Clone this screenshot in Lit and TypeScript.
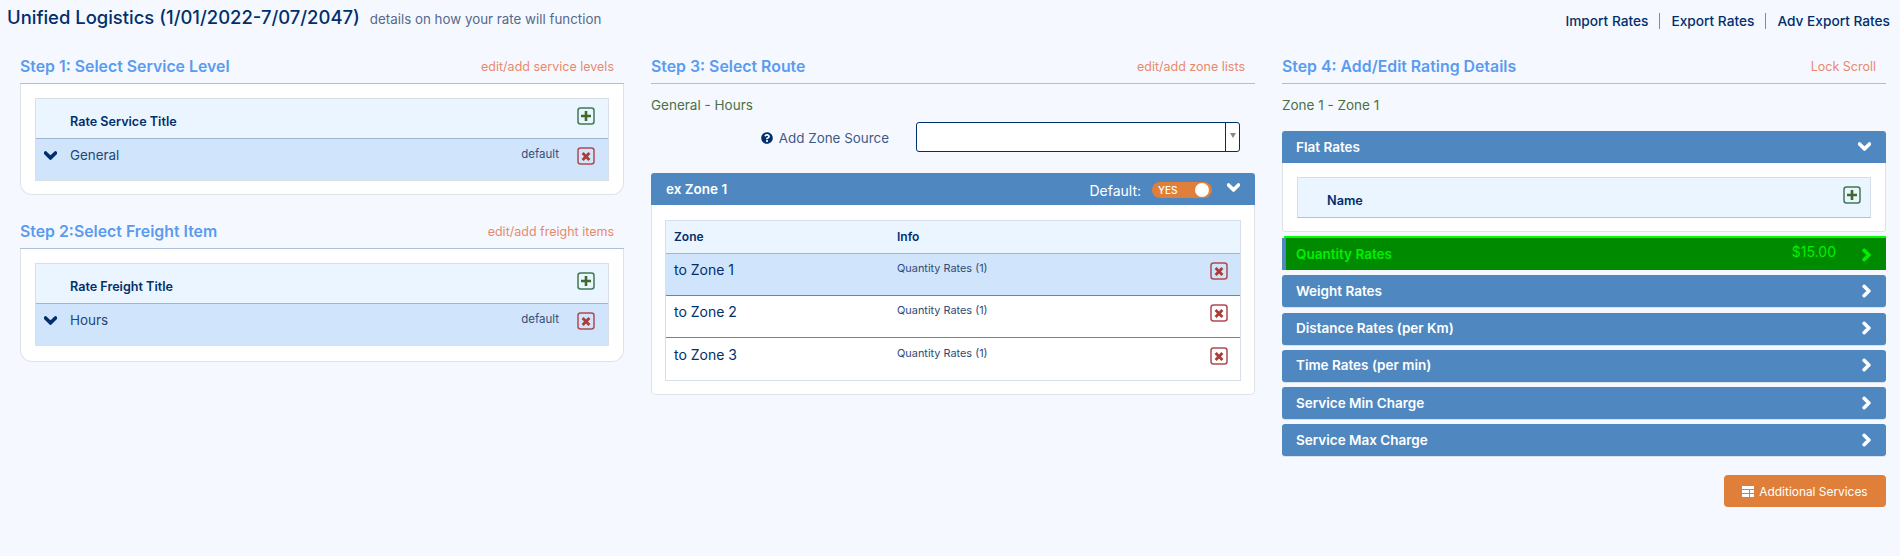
import { LitElement, html, css } from "lit";
import { customElement } from "lit/decorators.js";

const chevDown = () => html`<svg class="chev-d" viewBox="0 0 448 512"><path fill="currentColor" stroke="currentColor" stroke-width="45" d="M207.029 381.476L12.686 187.132c-9.373-9.373-9.373-24.569 0-33.941l22.667-22.667c9.357-9.357 24.522-9.375 33.901-.04L224 284.505l154.745-154.021c9.379-9.335 24.544-9.317 33.901.04l22.667 22.667c9.373 9.373 9.373 24.569 0 33.941L240.971 381.476c-9.373 9.372-24.569 9.372-33.942 0z"/></svg>`;
const chevRight = () => html`<svg class="chev-r" viewBox="0 0 320 512"><path fill="currentColor" stroke="currentColor" stroke-width="45" d="M285.476 272.971L91.132 467.314c-9.373 9.373-24.569 9.373-33.941 0l-22.667-22.667c-9.357-9.357-9.375-24.522-.04-33.901L188.505 256 34.484 101.255c-9.335-9.379-9.317-24.544.04-33.901l22.667-22.667c9.373-9.373 24.569-9.373 33.941 0L285.475 239.03c9.373 9.372 9.373 24.568.001 33.941z"/></svg>`;
const plus = () => html`<svg class="ico" viewBox="0 0 18 18"><rect x="1" y="1" width="16" height="16" rx="2.5" fill="none" stroke="#3f7a52" stroke-width="1.5"/><path d="M9 4v10M4 9h10" stroke="#3d6b2c" stroke-width="2.6" fill="none"/></svg>`;
const cross = () => html`<svg class="ico" viewBox="0 0 18 18"><rect x="1" y="1" width="16" height="16" rx="2.5" fill="none" stroke="#b04a52" stroke-width="1.5"/><path d="M5.6 6l6.8 7M12.4 6l-6.8 7" stroke="#ab3d38" stroke-width="2.8" fill="none"/></svg>`;

@customElement("app-root")
export class AppRoot extends LitElement {
  static styles = css`
    :host { display: block; width: 1900px; height: 556px; background: #f5f9ff; font-family: Inter, "Liberation Sans", sans-serif; color: #012f6c; overflow: hidden; }
    .top { height: 50px; display: flex; justify-content: space-between; box-sizing: border-box; padding: 0 10px 0 7px; }
    .title { display: flex; align-items: baseline; gap: 10px; padding-top: 6px; }
    .title h1 { margin: 0; font-size: 18.45px; line-height: 22px; font-weight: 500; color: #012f6c; }
    .title span { font-size: 13.35px; color: #56688c; }
    .links { display: flex; align-items: center; height: 16px; margin-top: 13px; font-size: 13.7px; font-weight: 500; }
    .links a { padding: 0 11px; border-right: 1px solid #7e8ba5; line-height: 16px; }
    .links a:last-child { border: 0; padding-right: 0; }
    .cols { display: grid; grid-template-columns: repeat(3, 604px); column-gap: 27px; padding-left: 20px; }
    .head { height: 34px; box-sizing: border-box; display: flex; align-items: center; justify-content: space-between; border-bottom: 1px solid #adc0da; padding-right: 10px; }
    .head h2 { margin: 0; font-size: 15.85px; font-weight: 600; color: #5a9bf0; }
    .head a { font-size: 12.5px; color: #e8896c; }
    .panel { background: #fff; border: 1px solid #dfe3e8; border-top: 0; border-radius: 0 0 12px 12px; padding: 14px 14px 13px; }
    .s2 { margin-top: 20px; }
    .s2 .panel { padding-top: 14px; padding-bottom: 15px; }
    .tbl { border: 1px solid #d8dfe6; }
    .thead { background: #eaf5ff; border-bottom: 1px solid #9db6d6; display: flex; justify-content: space-between; padding: 8px 13px 0 34px; box-sizing: border-box; height: 40px; }
    .thead b { font-size: 12.6px; line-height: 16px; font-weight: 600; margin-top: 7px; }
    .row { height: 41px; background: #d0e5fb; display: flex; align-items: flex-start; padding: 8px 13px 0 8px; box-sizing: border-box; }
    .chev-d { width: 13px; height: 15px; display: block; }
    .row .chev-d { margin-top: 1px; }
    .row .nm { margin-left: 13px; margin-top: -1px; font-size: 13.4px; line-height: 18px; flex: 1; color: #22467a; }
    .row .df { font-size: 11.5px; margin-right: 18px; margin-top: -1px; color: #33507c; line-height: 16px; }
    .ico { width: 18px; height: 18px; display: block; flex: none; }
    .sub { font-size: 13.5px; line-height: 18px; height: 18px; margin-top: 12px; color: #4c7046; }
    .src { display: flex; align-items: center; height: 30px; margin-top: 8px; }
    .lbl { width: 265px; display: flex; justify-content: flex-end; align-items: center; gap: 6px; font-size: 13.4px; color: #3f5a88; padding: 2px 27px 0 0; box-sizing: border-box; }
    .q { width: 12px; height: 12px; display: block; color: #012f6c; }
    .select { width: 324px; height: 30px; background: #fff; border: 1px solid #012f6c; border-radius: 3px; box-sizing: border-box; display: flex; justify-content: flex-end; }
    .arrowbox { width: 14px; border-left: 1px solid #012f6c; display: flex; justify-content: center; padding-top: 10px; box-sizing: border-box; }
    .arrowbox i { width: 0; height: 0; border: 3px solid transparent; border-top: 5px solid #888; }
    .bar { background: #4f88c0; color: #fff; height: 32px; border-radius: 3px 3px 0 0; display: flex; align-items: center; justify-content: space-between; padding: 0 15px 1px 14px; box-sizing: border-box; font-size: 13.5px; font-weight: 600; box-shadow: 0 1px 0 #d8e2ec; }
    .zone { margin-top: 21px; }
    .zone .bar { padding-left: 15px; padding-right: 15px; }
    .bar .r { display: flex; align-items: center; }
    .dlbl { font-size: 14px; font-weight: 400; margin: 4px 11px 0 0; }
    .tog { width: 60px; height: 16px; border-radius: 8px; background: #e07f3a; display: flex; align-items: center; justify-content: space-between; padding: 0 3px 0 6px; box-sizing: border-box; font-size: 10px; font-weight: 500; margin: 2px 15px 0 0; }
    .tog i { width: 14px; height: 14px; border-radius: 50%; background: #fff; }
    .zone .chev-d { margin-top: -2px; }
    .bar .chev-d { color: #fff; }
    .zpanel { background: #fff; border: 1px solid #dfe3e8; border-top: 0; border-radius: 0 0 5px 5px; padding: 15px 13px 13px; }
    .ztbl { border: 1px solid #d8dfe6; }
    .zh { height: 33px; background: #eaf5ff; border-bottom: 1px solid #9db6d6; box-sizing: border-box; display: grid; grid-template-columns: 223px 1fr; align-items: center; padding-left: 8px; font-size: 12px; font-weight: 600; padding-bottom: 1px; }
    .zr { height: 42px; display: grid; grid-template-columns: 223px 1fr 18px; padding: 0 12px 0 8px; box-sizing: border-box; border-bottom: 1px solid #6685ae; }
    .zr:last-child { border-bottom: 0; }
    .zr.sel { background: #d0e5fb; }
    .zr .z { font-size: 14px; line-height: 18px; margin-top: 7px; }
    .zr .i { font-size: 10.9px; color: #2f4a78; line-height: 14px; margin-top: 7px; }
    .zr .ico { margin-top: 8px; }
    .zr:last-child .ico { margin-top: 9px; }
    .zr:last-child .z, .zr:last-child .i { margin-top: 8px; }
    .bars { display: flex; flex-direction: column; }
    .flat { margin-top: 17px; }
    .fp { background: #fff; border: 1px solid #dfe3e8; border-top: 0; border-radius: 0 0 4px 4px; padding: 14px 14px 13px; }
    .ft { height: 41px; background: #eaf5ff; border: 1px solid #d5dfea; border-bottom: 1px solid #b1c2da; box-sizing: border-box; display: flex; justify-content: space-between; padding: 8px 9px 0 29px; }
    .ft b { font-size: 12.7px; line-height: 16px; font-weight: 600; margin-top: 7px; }
    .item { margin-top: 5.3px; border-radius: 3px; height: 32px; }
    .item .chev-r { width: 9px; height: 14px; display: block; color: #fff; }
    .q-rate { margin-top: 4px; height: 34px; background: linear-gradient(90deg, #4f88c0 4px, #008a00 4px); border-top: 2px solid #00ff00; border-radius: 0; color: #00f000; padding-top: 1px; box-shadow: none; border-image: linear-gradient(90deg, #f5f9ff 3px, #00ff00 3px) 1; }
    .item.q-rate .chev-r { color: #00f000; margin-top: 1px; }
    .price { font-size: 14px; font-weight: 400; margin: -5px 26px 0 0; }
    .btnrow { display: flex; justify-content: flex-end; margin-top: 19px; }
    .btn { width: 162px; height: 32px; background: #e07f3a; color: #fff; border-radius: 4px; display: flex; align-items: center; justify-content: center; gap: 5px; font-size: 11.9px; font-weight: 400; }
    .btn svg { width: 12px; height: 11px; display: block; }
  `;

  render() {
    const q = html`<svg class="q" viewBox="0 0 512 512"><path fill="currentColor" d="M504 256c0 136.997-111.043 248-248 248S8 392.997 8 256C8 119.083 119.043 8 256 8s248 111.083 248 248zM262.655 90c-54.497 0-89.255 22.957-116.549 63.758-3.536 5.286-2.353 12.415 2.715 16.258l34.699 26.31c5.205 3.947 12.621 3.008 16.665-2.122 17.864-22.658 30.113-35.797 57.303-35.797 20.429 0 45.698 13.148 45.698 32.958 0 14.976-12.363 22.667-32.534 33.976C247.128 238.528 216 254.941 216 296v4c0 6.627 5.373 12 12 12h56c6.627 0 12-5.373 12-12v-1.333c0-28.462 83.186-29.647 83.186-106.667 0-58.002-60.165-102-116.531-102zM256 338c-25.365 0-46 20.635-46 46 0 25.364 20.635 46 46 46s46-20.636 46-46c0-25.365-20.635-46-46-46z"/></svg>`;
    const listTable = (title: string, name: string) => html`<div class="tbl">
      <div class="thead"><b>${title}</b>${plus()}</div>
      <div class="row">${chevDown()}<span class="nm">${name}</span><span class="df">default</span>${cross()}</div>
    </div>`;
    return html`
      <div class="top">
        <div class="title"><h1>Unified Logistics (1/01/2022-7/07/2047)</h1><span>details on how your rate will function</span></div>
        <div class="links"><a>Import Rates</a><a>Export Rates</a><a>Adv Export Rates</a></div>
      </div>
      <div class="cols">
        <div>
          <div class="head"><h2>Step 1: Select Service Level</h2><a>edit/add service levels</a></div>
          <div class="panel">${listTable("Rate Service Title", "General")}</div>
          <div class="s2">
            <div class="head"><h2>Step 2:Select Freight Item</h2><a>edit/add freight items</a></div>
            <div class="panel">${listTable("Rate Freight Title", "Hours")}</div>
          </div>
        </div>
        <div>
          <div class="head"><h2>Step 3: Select Route</h2><a>edit/add zone lists</a></div>
          <div class="sub">General - Hours</div>
          <div class="src">
            <div class="lbl">${q}<span>Add Zone Source</span></div>
            <div class="select"><div class="arrowbox"><i></i></div></div>
          </div>
          <div class="zone">
            <div class="bar"><span>ex Zone 1</span><span class="r"><span class="dlbl">Default:</span><span class="tog">YES<i></i></span>${chevDown()}</span></div>
            <div class="zpanel">
              <div class="ztbl">
                <div class="zh"><span>Zone</span><span>Info</span></div>
                ${["to Zone 1", "to Zone 2", "to Zone 3"].map((z, i) => html`<div class="zr ${i === 0 ? "sel" : ""}"><span class="z">${z}</span><span class="i">Quantity Rates (1)</span>${cross()}</div>`)}
              </div>
            </div>
          </div>
        </div>
        <div>
          <div class="head"><h2>Step 4: Add/Edit Rating Details</h2><a>Lock Scroll</a></div>
          <div class="sub">Zone 1 - Zone 1</div>
          <div class="flat">
            <div class="bar"><span>Flat Rates</span>${chevDown()}</div>
            <div class="fp"><div class="ft"><b>Name</b>${plus()}</div></div>
          </div>
          <div class="bars">
            <div class="bar item q-rate"><span>Quantity Rates</span><span class="r"><span class="price">$15.00</span>${chevRight()}</span></div>
            ${["Weight Rates", "Distance Rates (per Km)", "Time Rates (per min)", "Service Min Charge", "Service Max Charge"].map((t) => html`<div class="bar item"><span>${t}</span>${chevRight()}</div>`)}
          </div>
          <div class="btnrow"><div class="btn"><svg viewBox="0 0 12 11"><path fill="currentColor" d="M0 0h12v3H0zM0 4h7v3H0zM8 4h4v3H8zM0 8h7v3H0zM8 8h4v3H8z"/></svg><span>Additional Services</span></div></div>
        </div>
      </div>
    `;
  }
}
